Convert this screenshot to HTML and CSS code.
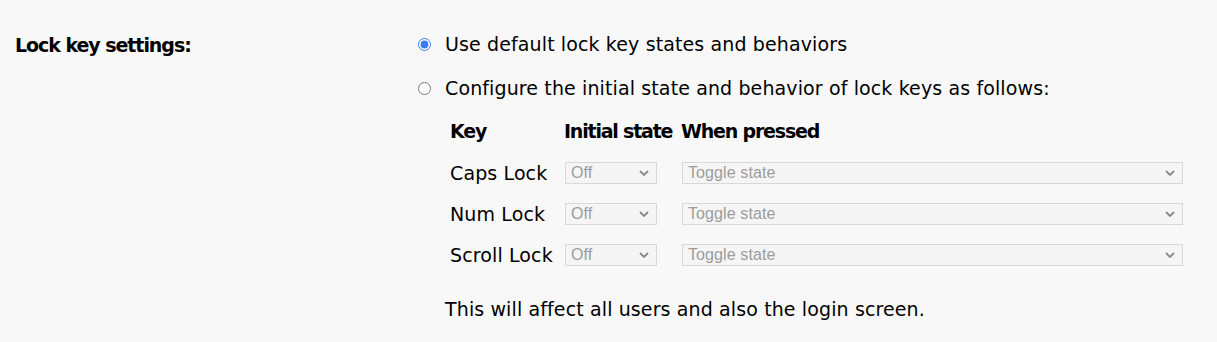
FILE: index.html
```html
<!DOCTYPE html>
<html lang="en">
<head>
  <meta charset="UTF-8" />
  <title>Lock key settings</title>
  <link rel="stylesheet" href="styles.css">
</head>
<body>
  <div class="ajuste">
    <div class="etiqueta">Lock key settings:</div>
    <div class="opciones">
      <label class="opcion">
        <input type="radio" name="lockkeys" checked />
        <span>Use default lock key states and behaviors</span>
      </label>
      <label class="opcion">
        <input type="radio" name="lockkeys" />
        <span>Configure the initial state and behavior of lock keys as follows:</span>
      </label>

      <div class="tabla">
        <div class="cabecera">Key</div>
        <div class="cabecera">Initial state</div>
        <div class="cabecera">When pressed</div>

        <div class="tecla">Caps Lock</div>
        <div class="combo estado"><select disabled><option>Off</option></select><svg viewBox="0 0 10 6"><path d="M1 1l4 4 4-4"/></svg></div>
        <div class="combo accion"><select disabled><option>Toggle state</option></select><svg viewBox="0 0 10 6"><path d="M1 1l4 4 4-4"/></svg></div>

        <div class="tecla">Num Lock</div>
        <div class="combo estado"><select disabled><option>Off</option></select><svg viewBox="0 0 10 6"><path d="M1 1l4 4 4-4"/></svg></div>
        <div class="combo accion"><select disabled><option>Toggle state</option></select><svg viewBox="0 0 10 6"><path d="M1 1l4 4 4-4"/></svg></div>

        <div class="tecla">Scroll Lock</div>
        <div class="combo estado"><select disabled><option>Off</option></select><svg viewBox="0 0 10 6"><path d="M1 1l4 4 4-4"/></svg></div>
        <div class="combo accion"><select disabled><option>Toggle state</option></select><svg viewBox="0 0 10 6"><path d="M1 1l4 4 4-4"/></svg></div>
      </div>

      <p class="nota">This will affect all users and also the login screen.</p>
    </div>
  </div>
</body>
</html>
```

FILE: styles.css
```css
body {
  margin: 0;
  background: #f8f8f8;
  color: #000;
  font-family: "DejaVu Sans", sans-serif;
  font-size: 19px;
  line-height: 22px;
}

.ajuste {
  display: flex;
  padding: 33px 0 0 15px;
}

.etiqueta {
  width: 403px;
  flex-shrink: 0;
  font-weight: bold;
  letter-spacing: -1.05px;
  padding-top: 1px;
}

.opciones {
  flex: 1;
  letter-spacing: 0.12px;
}

.opcion {
  display: flex;
  align-items: center;
  height: 22px;
  margin-bottom: 22px;
}

.opcion input {
  margin: 0 14px 0 0;
  width: 13px;
  height: 13px;
  accent-color: #3b7cf5;
}

.tabla {
  display: grid;
  grid-template-columns: 114px 117px 501px;
  grid-template-rows: 42px 41px 41px 41px;
  align-items: center;
  margin-left: 32px;
  margin-top: -11px;
}

.cabecera {
  font-weight: bold;
  letter-spacing: -1.2px;
  white-space: nowrap;
}

.tecla {
  white-space: nowrap;
}

.combo {
  position: relative;
  height: 22px;
  margin-left: 1px;
}

.combo select {
  appearance: none;
  display: block;
  width: 100%;
  height: 22px;
  margin: 0;
  padding: 0 5px;
  font-family: "Liberation Sans", sans-serif;
  font-size: 16px;
  letter-spacing: 0.1px;
  color: #9c9c9c;
  opacity: 1;
  background: #f5f5f5;
  border: 1px solid #d8d8d8;
  border-radius: 0;
}

.combo svg {
  position: absolute;
  right: 8px;
  top: 8px;
  width: 10px;
  height: 6px;
  fill: none;
  stroke: #888;
  stroke-width: 1.8;
}

.estado {
  width: 92px;
}

.accion {
  width: 501px;
}

.nota {
  margin: 23px 0 0 27px;
}
```
